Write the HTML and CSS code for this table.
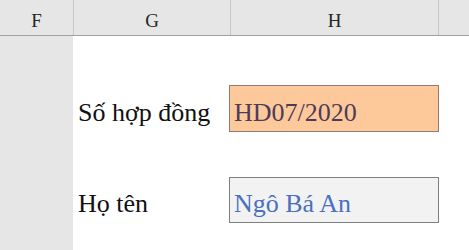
FILE: index.html
```html
<!DOCTYPE html>
<html lang="vi">
<head>
<meta charset="utf-8">
<link rel="stylesheet" href="styles.css">
</head>
<body>
<div class="sheet">
  <div class="header">
    <div class="hcell col-f">F</div>
    <div class="hcell col-g">G</div>
    <div class="hcell col-h">H</div>
    <div class="hcell col-i"></div>
  </div>
  <div class="body">
    <div class="frow"></div>
    <div class="content">
      <div class="row row-1">
        <div class="label">Số hợp đồng</div>
        <div class="box box-orange">HD07/2020</div>
      </div>
      <div class="row row-2">
        <div class="label">Họ tên</div>
        <div class="box box-gray">Ngô Bá An</div>
      </div>
    </div>
  </div>
</div>
</body>
</html>
```
FILE: styles.css
```css
html, body {
  margin: 0;
  padding: 0;
  background: #ffffff;
  font-family: "Liberation Serif", "Times New Roman", serif;
}
.sheet {
  width: 469px;
  height: 250px;
  overflow: hidden;
  display: flex;
  flex-direction: column;
  font-family: "Liberation Serif", "Times New Roman", serif;
}
.header {
  display: flex;
  height: 36px;
  background: #e6e6e6;
  border-bottom: 1px solid #a2a2a2;
  box-sizing: border-box;
}
.hcell {
  font-family: "Liberation Serif", "Times New Roman", serif;
  display: flex;
  align-items: flex-end;
  justify-content: center;
  padding-bottom: 3px;
  font-size: 19px;
  color: #262626;
  border-right: 1px solid #c6c6c6;
  line-height: 22px;
  box-sizing: border-box;
}
.col-f { width: 74px; }
.col-g { width: 157px; }
.col-h { width: 208px; }
.col-i { flex: 1; border-right: none; }
.body { flex: 1; display: flex; }
.frow { width: 73px; background: #e6e6e6; }
.content { flex: 1; display: flex; flex-direction: column; gap: 45px; padding-top: 49px; }
.row { display: flex; height: 47px; }
.row-2 { height: 46px; }
.label {
  font-family: "Liberation Serif", "Times New Roman", serif;
  width: 156px;
  padding-left: 5px;
  display: flex;
  align-items: flex-end;
  font-size: 26px;
  line-height: 30px;
  padding-bottom: 4px;
  color: #111111;
  box-sizing: border-box;
}
.box {
  font-family: "Liberation Serif", "Times New Roman", serif;
  width: 210px;
  display: flex;
  align-items: flex-end;
  font-size: 26px;
  line-height: 30px;
  padding-left: 4px;
  padding-bottom: 3px;
  box-sizing: border-box;
}
.box-orange { background: #fdc99b; border: 1px solid #8d7d74; color: #4d3c58; }
.box-gray { background: #f2f2f2; border: 1px solid #7f7f7f; color: #4a70bf; }
```
